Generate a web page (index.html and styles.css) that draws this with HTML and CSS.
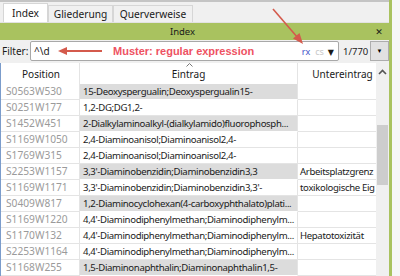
FILE: index.html
```html
<!DOCTYPE html>
<html lang="de">

<head>
    <meta charset="UTF-8">
    <meta name="viewport" content="width=device-width, initial-scale=1.0">
    <title>Index</title>
    <link rel="stylesheet" href="styles.css">
</head>

<body>
    <div class="window">
        <div class="panel">
            <div class="topline"></div>
            <div class="tabs">
                <div class="tab active">Index</div>
                <div class="tab tab-outline">Gliederung</div>
                <div class="tab tab-refs">Querverweise</div>
            </div>
            <div class="titlebar">
                <span class="title">Index</span>
                <span class="close">&#10005;</span>
            </div>
            <div class="filter">
                <label class="filter-label" for="query">Filter:</label>
                <div class="search">
                    <span class="query" id="query">^\d</span>
                    <svg class="hint-arrow" width="44" height="8" viewBox="0 0 44 8">
                        <line x1="3" y1="4" x2="44" y2="4" stroke="#d45a4c" stroke-width="2"/>
                        <polygon points="0,4 9,0 9,8" fill="#d45a4c"/>
                    </svg>
                    <span class="hint">Muster: regular expression</span>
                    <span class="rx">rx</span>
                    <span class="cs">cs</span>
                    <span class="caret">&#9660;</span>
                </div>
                <span class="count">1/770</span>
                <button class="drop">&#9660;</button>
            </div>
            <div class="grid">
                <div class="table">
                    <div class="row head">
                        <div class="cell pos">Position</div>
                        <div class="cell entry">
                            Eintrag
                            <svg class="sort" width="7" height="4" viewBox="0 0 7 4">
                                <polyline points="0.5,3.5 3.5,0.5 6.5,3.5" fill="none" stroke="#777" stroke-width="1"/>
                            </svg>
                        </div>
                        <div class="cell sub">Untereintrag</div>
                    </div>
                    <div class="row">
                        <div class="cell pos">S0563W530</div>
                        <div class="cell entry mark">15-Deoxyspergualin;Deoxyspergualin15-</div>
                        <div class="cell sub"></div>
                    </div>
                    <div class="row">
                        <div class="cell pos">S0251W177</div>
                        <div class="cell entry">1,2-DG;DG1,2-</div>
                        <div class="cell sub"></div>
                    </div>
                    <div class="row">
                        <div class="cell pos">S1452W451</div>
                        <div class="cell entry mark">2-Dialkylaminoalkyl-(dialkylamido)fluorophosph...</div>
                        <div class="cell sub"></div>
                    </div>
                    <div class="row">
                        <div class="cell pos">S1169W1050</div>
                        <div class="cell entry">2,4-Diaminoanisol;Diaminoanisol2,4-</div>
                        <div class="cell sub"></div>
                    </div>
                    <div class="row">
                        <div class="cell pos">S1769W315</div>
                        <div class="cell entry">2,4-Diaminoanisol;Diaminoanisol2,4-</div>
                        <div class="cell sub"></div>
                    </div>
                    <div class="row">
                        <div class="cell pos">S2253W1157</div>
                        <div class="cell entry mark">3,3'-Diaminobenzidin;Diaminobenzidin3,3</div>
                        <div class="cell sub">Arbeitsplatzgrenz</div>
                    </div>
                    <div class="row">
                        <div class="cell pos">S1169W1171</div>
                        <div class="cell entry">3,3'-Diaminobenzidin;Diaminobenzidin3,3'-</div>
                        <div class="cell sub">toxikologische Eig</div>
                    </div>
                    <div class="row">
                        <div class="cell pos">S0409W817</div>
                        <div class="cell entry mark">1,2-Diaminocyclohexan(4-carboxyphthalato)plati...</div>
                        <div class="cell sub"></div>
                    </div>
                    <div class="row">
                        <div class="cell pos">S1169W1220</div>
                        <div class="cell entry">4,4'-Diaminodiphenylmethan;Diaminodiphenylm...</div>
                        <div class="cell sub"></div>
                    </div>
                    <div class="row">
                        <div class="cell pos">S1170W132</div>
                        <div class="cell entry">4,4'-Diaminodiphenylmethan;Diaminodiphenylm...</div>
                        <div class="cell sub">Hepatotoxizität</div>
                    </div>
                    <div class="row">
                        <div class="cell pos">S2253W1164</div>
                        <div class="cell entry">4,4'-Diaminodiphenylmethan;Diaminodiphenylm...</div>
                        <div class="cell sub"></div>
                    </div>
                    <div class="row">
                        <div class="cell pos">S1168W255</div>
                        <div class="cell entry mark">1,5-Diaminonaphthalin;Diaminonaphthalin1,5-</div>
                        <div class="cell sub"></div>
                    </div>
                </div>
                <div class="scrollbar">
                    <svg class="scroll-up" width="9" height="6" viewBox="0 0 9 6">
                        <polyline points="1,5 4.5,1.5 8,5" fill="none" stroke="#555" stroke-width="1.6"/>
                    </svg>
                    <div class="thumb"></div>
                </div>
            </div>
        </div>
        <div class="edge"></div>
    </div>

    <!-- annotation arrow pointing at the rx switch -->
    <svg class="annot" width="400" height="276" viewBox="0 0 400 276">
        <line x1="273" y1="9" x2="298" y2="38" stroke="#d45a4c" stroke-width="1.6"/>
        <polygon points="303,44 293,38.5 299.5,33" fill="#d45a4c"/>
    </svg>
</body>

</html>
```

FILE: styles.css
```css
body {
    margin: 0;
    background-color: #f6f6f6;
    font-family: 'Noto Sans', 'DejaVu Sans', sans-serif;
    font-size: 10px;
    color: #1a1a1a;
}

.window {
    display: flex;
    width: 400px;
    height: 276px;
    overflow: hidden;
}

.panel {
    display: flex;
    flex-direction: column;
    width: 389px;
    background-color: #f0f0f0;
}

.edge {
    width: 3px;
    background-color: #a9c25f;
}

.topline {
    height: 2px;
    background-color: #c4c4c4;
}

/* tabs */

.tabs {
    display: flex;
    align-items: flex-end;
    height: 20px;
    padding-left: 3px;
    border-bottom: 1px solid #e2e2e2;
}

.tab {
    box-sizing: border-box;
    width: 65px;
    height: 17px;
    line-height: 16px;
    text-align: center;
    font-size: 10.2px;
    border: 1px solid #d6d6d6;
    border-bottom: none;
    background-color: #f0f0f0;
}

.tab.active {
    width: 45px;
    height: 19px;
    line-height: 18px;
    background-color: #fff;
}

.tab-refs {
    width: 80px;
}

/* green title */

.titlebar {
    display: flex;
    align-items: center;
    height: 18px;
    background-color: #a9c25f;
}

.title {
    flex: 1;
    text-align: center;
    padding-right: 6px;
    font-size: 9.5px;
}

.close {
    width: 16px;
    margin-right: 2px;
    font-weight: bold;
    font-size: 9px;
    text-align: center;
}

/* filter row */

.filter {
    display: flex;
    align-items: center;
    height: 22px;
}

.filter-label {
    width: 30px;
    padding-left: 2px;
    box-sizing: border-box;
}

.search {
    box-sizing: border-box;
    display: flex;
    align-items: center;
    width: 309px;
    height: 20px;
    padding: 0 3px;
    background-color: #fff;
    border: 1px solid #a8a8a8;
    border-radius: 2px;
}

.query {
    width: 13px;
}

.hint-arrow {
    margin-left: 11px;
}

.hint {
    flex: 1;
    margin-left: 11px;
    color: #ee5262;
    font-family: 'Liberation Sans', Arial, sans-serif;
    font-weight: bold;
    font-size: 11px;
}

.rx {
    color: #3a4fc8;
    margin-right: 5px;
    font-size: 9px;
}

.cs {
    color: #c8c8c8;
    margin-right: 4px;
    font-size: 9px;
}

.caret {
    font-size: 8px;
    margin-right: 1px;
}

.count {
    width: 31px;
    padding-left: 4px;
    box-sizing: border-box;
    font-size: 9.5px;
}

.drop {
    box-sizing: border-box;
    width: 19px;
    height: 20px;
    padding: 0;
    font-size: 6px;
    background-color: #e1e1e1;
    border: 1px solid #adadad;
}

/* table */

.grid {
    flex: 1;
    display: flex;
    background-color: #fff;
    border-left: 1px solid #7b9ccb;
    margin-top: 1px;
}

.table {
    width: 375px;
}

.row {
    display: flex;
    height: 16px;
}

.row.head {
    height: 21px;
}

.cell {
    box-sizing: border-box;
    height: 100%;
    padding: 0 3px;
    line-height: 15px;
    font-size: 9.6px;
    letter-spacing: -0.35px;
    white-space: nowrap;
    overflow: hidden;
    border-right: 1px solid #e4e4e4;
    border-bottom: 1px solid #e4e4e4;
}

.head .cell {
    position: relative;
    line-height: 23px;
    font-size: 10px;
    letter-spacing: 0;
    text-align: center;
    border-bottom: none;
}

.pos {
    width: 79px;
    padding-left: 5px;
    font-size: 10.2px;
    letter-spacing: 0;
    color: #9a9a9a;
}

.head .pos {
    color: #1a1a1a;
}

.entry {
    width: 218px;
}

.entry.mark {
    background-color: #dcdcdc;
    border-bottom-color: #fff;
}

.sub {
    width: 78px;
    padding: 0 1px 0 2px;
    border-right: none;
}

.head .sub {
    padding-left: 12px;
}

.sort {
    position: absolute;
    top: 0;
    left: 106px;
}

.scrollbar {
    width: 13px;
    background-color: #f0f0f0;
}

.scroll-up {
    display: block;
    margin: 6px auto 0;
}

.thumb {
    width: 11px;
    height: 60px;
    margin: 50px auto 0;
    background-color: #cdcdcd;
}

.annot {
    position: absolute;
    top: 0;
    left: 0;
    pointer-events: none;
}
```
